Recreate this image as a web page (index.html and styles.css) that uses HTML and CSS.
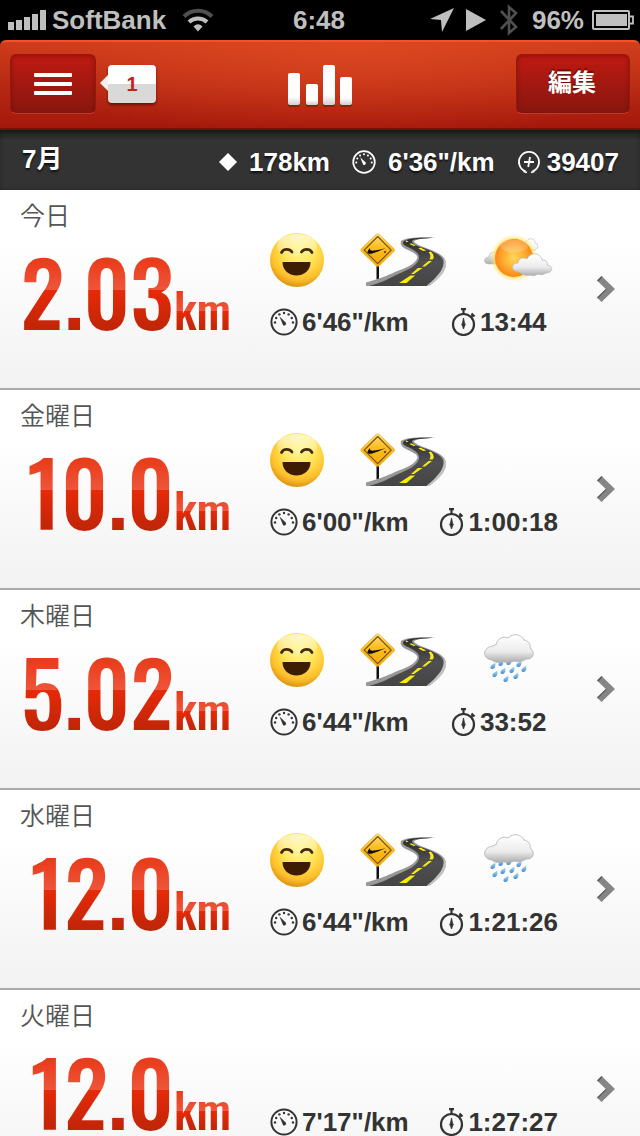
FILE: index.html
```html
<!DOCTYPE html>
<html lang="ja">
<head>
<meta charset="utf-8">
<meta name="viewport" content="width=device-width, initial-scale=1">
<title>7月</title>
<link rel="stylesheet" href="styles.css">
</head>
<body>
<svg class="sprite" aria-hidden="true">
  <defs>
    <radialGradient id="faceFill" cx="55%" cy="32%" r="72%">
      <stop offset="0" stop-color="#fff58a"/><stop offset=".4" stop-color="#ffe65a"/><stop offset=".75" stop-color="#fdc02a"/><stop offset="1" stop-color="#d48a10"/>
    </radialGradient>
    <linearGradient id="faceShine" x1="0" y1="0" x2="0" y2="1">
      <stop offset="0" stop-color="#fff" stop-opacity=".7"/><stop offset="1" stop-color="#fff" stop-opacity="0"/>
    </linearGradient>
    <linearGradient id="signFill" x1="0" y1="0" x2="0" y2="1">
      <stop offset="0" stop-color="#ffdf80"/><stop offset=".4" stop-color="#ffbe22"/><stop offset="1" stop-color="#f9aa00"/>
    </linearGradient>
    <linearGradient id="roadFill" x1="0" y1="0" x2="0" y2="1">
      <stop offset="0" stop-color="#2b2b2b"/><stop offset=".5" stop-color="#505050"/><stop offset="1" stop-color="#444"/>
    </linearGradient>
    <radialGradient id="sunFill" cx="50%" cy="50%" r="52%">
      <stop offset="0" stop-color="#ffd95c"/><stop offset=".55" stop-color="#ffac30"/><stop offset="1" stop-color="#fb8414"/>
    </radialGradient>
    <radialGradient id="sunGlow">
      <stop offset=".75" stop-color="#ffdc3c" stop-opacity=".9"/><stop offset="1" stop-color="#fff3a0" stop-opacity="0"/>
    </radialGradient>
    <linearGradient id="cloudFill" x1="0" y1="0" x2="0" y2="1">
      <stop offset="0" stop-color="#fff"/><stop offset=".6" stop-color="#ececec"/><stop offset="1" stop-color="#adadad"/>
    </linearGradient>
    <linearGradient id="dropFill" x1="0" y1="0" x2="0" y2="1">
      <stop offset="0" stop-color="#b9daf2"/><stop offset="1" stop-color="#3f8fd6"/>
    </linearGradient>
    <linearGradient id="barFill" x1="0" y1="0" x2="0" y2="1">
      <stop offset=".75" stop-color="#fff"/><stop offset="1" stop-color="#cfcfcf"/>
    </linearGradient>
    <symbol id="gauge" viewBox="0 0 28 28">
      <circle cx="14" cy="14" r="12.6" fill="none" stroke="currentColor" stroke-width="2"/>
      <g fill="currentColor">
        <circle cx="5" cy="14.5" r="1.2"/><circle cx="6.2" cy="10" r="1.2"/><circle cx="9.4" cy="6.4" r="1.2"/><circle cx="14" cy="5" r="1.2"/><circle cx="18.600" cy="6.4" r="1.2"/><circle cx="21.800" cy="10" r="1.2"/><circle cx="23" cy="14.5" r="1.2"/>
        <path d="M9.5 8.500l6.400 6.200a2 2 0 0 1-2.800 2.600z"/>
      </g>
    </symbol>
    <symbol id="watch" viewBox="0 0 24 28">
      <circle cx="12" cy="16.500" r="10.500" fill="none" stroke="currentColor" stroke-width="2.200"/>
      <path d="M9.500 1.200h5M12 1v5M20 5.500l3 3M19.500 9l2-2" fill="none" stroke="currentColor" stroke-width="2.200"/>
      <path d="M12 10l1 5a2 2 0 0 1 0 3l-1 3-1-3a2 2 0 0 1 0-3z" fill="currentColor" stroke="currentColor" stroke-width=".8"/>
    </symbol>
    <symbol id="fuel" viewBox="0 0 24 24">
      <path d="M8.500 21.300a10 10 0 1 1 7 0" fill="none" stroke="currentColor" stroke-width="1.800"/>
      <path d="M13 7l-1.800 10M7 12h10M6.500 21.500l3.500 1M17.500 21.500l-3.500 1" fill="none" stroke="currentColor" stroke-width="1.800"/>
    </symbol>
    <symbol id="smile" viewBox="0 0 54 54">
      <circle cx="27" cy="27" r="27" fill="url(#faceFill)"/>
      <ellipse cx="27" cy="13" rx="20" ry="12" fill="url(#faceShine)"/>
      <path d="M11.500 19.500c2-4 8-4 10.500-.5M31.500 19c2.500-3.500 8.500-3.500 10.500.5" fill="none" stroke="#4a2a08" stroke-width="2.800" stroke-linecap="round"/>
      <path d="M12.500 29h28c0 8-6 13.500-14 13.500s-14-5.500-14-13.500z" fill="#3d1d02"/>
    </symbol>
    <symbol id="road" viewBox="0 0 86 54">
      <path d="M6 53v-3.500C18 46 27 43 35 39c10-4 19-7 22-13 2-4-3-6-9-9-7-3-8-6-7-9C46 4 62 4 76 4.500c-12 .8-22 2-22 4 1 3 9 5 16 8 10 4 16 8 16 14 0 8-8 16-17 22.500z" fill="#989898"/>
      <path d="M9 53c12-3 19-7 27-11 11-5 20-8 23-16 1-6-5-9-11-12-5-2-6-4-4-6C50 4.500 62 4.800 73 4.800 60 6 51 6 52 9c2 4 10 5 17 8 9 4 14.500 7 14.500 13 0 9-8 16-17 23z" fill="url(#roadFill)"/>
      <path d="M83.500 25c3 9-6 19-17 28H69c10-7 17-14 17-22 0-2-1-4-2.500-6z" fill="#c2c2c2"/>
      <path d="M39 50h7.500l8.500-7.500h-4.500zM54 41l8.500-6h-4.500l-7 6zM65 33.500l7-5.500h-3.500l-6.500 5.500zM72.500 26.500c2.500-2 1-6-2-8l-2 .8c2 2 2.500 4 1 7.200zM66.500 17.500l-6-3-2.200.9 5 2.500zM56 12.500l-5-2.200-1.500.8 4 2zM48.500 8.500l-2-1-1.200.6 1.500 1.200z" fill="#f8ea14"/>
      <path d="M16.500 32H19v13.500l-2.500.8z" fill="#111"/>
      <path d="M16 1.600q1.700-1.700 3.400 0l14.500 14q1.400 1.500 0 3l-14.500 14q-1.700 1.700-3.400 0l-14.500-14q-1.400-1.500 0-3z" fill="url(#signFill)" stroke="#e2a321" stroke-width=".6"/>
      <path d="M17.700 3.500l13.500 13.600-13.500 13.600L4.200 17.100z" fill="none" stroke="#6b501a" stroke-width="1.100" stroke-linejoin="round"/>
      <path d="M10 15c-3.500 3.500-3.500 6.500 1.500 5.700 3.500-.7 9-3.200 14.500-5.700-5 1.300-9.500 2.400-12.500 2.600-2.700.2-3.900-.8-3.500-2.600z" fill="#111"/>
      <circle cx="25" cy="19" r="1.200" fill="#7a5210"/>
    </symbol>
    <symbol id="sun" viewBox="0 0 70 54">
      <g fill="url(#cloudFill)" stroke="#aaa" stroke-width=".5">
        <path d="M5 31c-6 0-6-7 0-7 0-5 5-6 8-4v11zM42 9c2-5 10-4 9 1 5 1 3 7-1 7h-8z"/>
      </g>
      <circle cx="30" cy="25" r="24" fill="url(#sunGlow)"/>
      <circle cx="30" cy="25" r="19" fill="url(#sunFill)"/>
      <ellipse cx="30" cy="13" rx="14" ry="6.500" fill="#fff" opacity=".22"/>
      <path d="M35 39c-8 0-9-9-1-9 0-5 6-6 9-4 4-8 14-6 15 1 5-1 6 4 5 5 7 1 6 8-1 8-2 2-6 2-8 1-3 2-6 2-8 1-3 1-8 0-11-3z" fill="url(#cloudFill)" stroke="#b6b6b6" stroke-width=".7"/>
    </symbol>
    <symbol id="drop" viewBox="0 0 7 8">
      <path d="M6 0c.8 3 .3 7-2.700 7.500C.5 7.800-.4 5 1.500 3.300 3 2 4.500 1.500 6 0z" fill="url(#dropFill)"/>
    </symbol>
    <symbol id="rain" viewBox="0 0 70 54">
      <use href="#drop" x="6" y="29" width="6" height="8"/><use href="#drop" x="14" y="26" width="6" height="8"/><use href="#drop" x="22" y="25" width="6" height="8"/><use href="#drop" x="32" y="27" width="6" height="8"/>
      <use href="#drop" x="8" y="37" width="6" height="8"/><use href="#drop" x="16" y="34" width="6" height="8"/><use href="#drop" x="25" y="33" width="6" height="8"/><use href="#drop" x="37" y="32" width="6" height="8"/>
      <use href="#drop" x="19" y="42" width="6" height="8"/><use href="#drop" x="29" y="39" width="6" height="8"/>
      <path d="M8 27c-10-1-10-13 1-14 2-2 3-1 3-1 1-7 8-9 12-7 6-6 14-3 16 2 5 1 7 5 6 8 6 4 3 12-4 11-4 3-9 3-12 2-4 2-9 2-11 0-4 2-8 2-11-1z" fill="url(#cloudFill)" stroke="#b0b0b0" stroke-width=".8"/>
    </symbol>
    <symbol id="chevron" viewBox="0 0 18 26">
      <path d="M0 4.500L4.500 0 18 13 4.500 26 0 21.500 8.800 13z" fill="#858585"/>
      <path d="M0 4.500L4.500 0l1 1-4 4.500zM0 21.500L8.800 13l.8.800L1 22.500z" fill="#5e5e5e"/>
    </symbol>
  </defs>
</svg>

<div class="app">
  <div class="status">
    <div class="status-side">
      <svg class="signal" viewBox="0 0 38 20"><path d="M0 12h6v8H0zM8 10h6v10H8zM16 7h6v13h-6zM24 4h6v16h-6zM32 0h6v20h-6z" fill="#bfbfbf"/></svg>
      <span>SoftBank</span>
      <svg class="wifi" viewBox="0 0 32 24">
        <path d="M2 8.500a20 20 0 0 1 28 0" fill="none" stroke="#505050" stroke-width="4"/>
        <path d="M7 14a13 13 0 0 1 18 0" fill="none" stroke="#bfbfbf" stroke-width="4"/>
        <path d="M11.500 18.500q4.500-4.500 9 0L16 23.500z" fill="#bfbfbf"/>
      </svg>
    </div>
    <span>6:48</span>
    <div class="status-side status-right">
      <svg class="locate" viewBox="0 0 24 24"><path d="M24 0L12 24l-1-12L0 11z" fill="#bfbfbf"/></svg>
      <svg class="play" viewBox="0 0 20 22"><path d="M0 0l20 11L0 22z" fill="#bfbfbf"/></svg>
      <svg class="bluetooth" viewBox="0 0 18 32"><path d="M1 7l15 16-7 6V3l7 6L1 25" fill="none" stroke="#505050" stroke-width="2.600"/></svg>
      <span>96%</span>
      <svg class="battery" viewBox="0 0 42 20"><rect x="1" y="1" width="36" height="18" rx="1" fill="none" stroke="#bfbfbf" stroke-width="2"/><path d="M4 4h31v12H4z" fill="#bfbfbf"/><path d="M38 6.500h3v7h-3" fill="none" stroke="#bfbfbf" stroke-width="1.800"/></svg>
    </div>
  </div>

  <header class="navbar">
    <div class="nav-left">
      <button class="nav-button menu" type="button" aria-label="メニュー"><svg class="lines" viewBox="0 0 38 22"><g fill="#fff"><rect width="38" height="4" rx="1"/><rect y="9" width="38" height="4" rx="1"/><rect y="18" width="38" height="4" rx="1"/></g></svg></button>
      <span class="bubble">1</span>
    </div>
    <svg class="bars" viewBox="0 0 64 42">
      <g fill="#6d170c" opacity=".6"><rect y="10" width="12" height="32" rx="2"/><rect x="18" y="21" width="12" height="21" rx="2"/><rect x="35" y="2" width="12" height="40" rx="2"/><rect x="52" y="14" width="12" height="28" rx="2"/></g>
      <g fill="url(#barFill)"><rect y="8" width="12" height="32" rx="2"/><rect x="18" y="19" width="12" height="21" rx="2"/><rect x="35" width="12" height="40" rx="2"/><rect x="52" y="12" width="12" height="28" rx="2"/></g>
    </svg>
    <button class="nav-button edit" type="button">編集</button>
  </header>

  <section class="summary">
    <h1 class="month">7月</h1>
    <div class="total"><svg class="diamond" viewBox="0 0 18 18"><path d="M9 0l9 9-9 9-9-9z" fill="#fff"/></svg><span>178km</span></div>
    <div class="total"><svg class="total-icon" viewBox="0 0 28 28"><use href="#gauge"/></svg><span>6'36"/km</span></div>
    <div class="total tight"><svg class="total-icon" viewBox="0 0 24 24"><use href="#fuel"/></svg><span>39407</span></div>
  </section>

  <main class="runs">
    <a class="run" href="#run-1">
      <div class="lead"><div class="day">今日</div><div class="distance"><span class="value">2.03</span><span class="unit">km</span></div></div>
      <div class="details">
        <div class="tags"><svg class="smile"><use href="#smile"/></svg><svg class="road"><use href="#road"/></svg><svg class="weather"><use href="#sun"/></svg></div>
        <div class="stats"><div class="stat"><svg class="gauge"><use href="#gauge"/></svg><span>6'46"/km</span></div><div class="stat time"><svg class="watch"><use href="#watch"/></svg><span>13:44</span></div></div>
      </div>
      <svg class="chevron"><use href="#chevron"/></svg>
    </a>
    <a class="run" href="#run-2">
      <div class="lead"><div class="day">金曜日</div><div class="distance"><span class="value">10.0</span><span class="unit">km</span></div></div>
      <div class="details">
        <div class="tags"><svg class="smile"><use href="#smile"/></svg><svg class="road"><use href="#road"/></svg></div>
        <div class="stats"><div class="stat"><svg class="gauge"><use href="#gauge"/></svg><span>6'00"/km</span></div><div class="stat time"><svg class="watch"><use href="#watch"/></svg><span>1:00:18</span></div></div>
      </div>
      <svg class="chevron"><use href="#chevron"/></svg>
    </a>
    <a class="run" href="#run-3">
      <div class="lead"><div class="day">木曜日</div><div class="distance"><span class="value">5.02</span><span class="unit">km</span></div></div>
      <div class="details">
        <div class="tags"><svg class="smile"><use href="#smile"/></svg><svg class="road"><use href="#road"/></svg><svg class="weather"><use href="#rain"/></svg></div>
        <div class="stats"><div class="stat"><svg class="gauge"><use href="#gauge"/></svg><span>6'44"/km</span></div><div class="stat time"><svg class="watch"><use href="#watch"/></svg><span>33:52</span></div></div>
      </div>
      <svg class="chevron"><use href="#chevron"/></svg>
    </a>
    <a class="run" href="#run-4">
      <div class="lead"><div class="day">水曜日</div><div class="distance"><span class="value">12.0</span><span class="unit">km</span></div></div>
      <div class="details">
        <div class="tags"><svg class="smile"><use href="#smile"/></svg><svg class="road"><use href="#road"/></svg><svg class="weather"><use href="#rain"/></svg></div>
        <div class="stats"><div class="stat"><svg class="gauge"><use href="#gauge"/></svg><span>6'44"/km</span></div><div class="stat time"><svg class="watch"><use href="#watch"/></svg><span>1:21:26</span></div></div>
      </div>
      <svg class="chevron"><use href="#chevron"/></svg>
    </a>
    <a class="run" href="#run-5">
      <div class="lead"><div class="day">火曜日</div><div class="distance"><span class="value">12.0</span><span class="unit">km</span></div></div>
      <div class="details">
        <div class="tags"></div>
        <div class="stats"><div class="stat"><svg class="gauge"><use href="#gauge"/></svg><span>7'17"/km</span></div><div class="stat time"><svg class="watch"><use href="#watch"/></svg><span>1:27:27</span></div></div>
      </div>
      <svg class="chevron"><use href="#chevron"/></svg>
    </a>
  </main>
</div>
</body>
</html>
```
FILE: styles.css
```css
* { box-sizing: border-box; }
body {
  margin: 0;
  background: #000;
  color: #333;
  font: bold 26px/30px "Liberation Sans", "Noto Sans CJK JP", sans-serif;
}
svg { display: block; flex: none; }
.sprite { position: absolute; width: 0; height: 0; }
.app { height: 100vh; display: flex; flex-direction: column; overflow: hidden; }

.status {
  flex: none;
  display: grid;
  grid-template-columns: 1fr auto 1fr;
  align-items: center;
  height: 40px;
  padding: 0 6px 0 8px;
  color: #bfbfbf;
}
.status > span { margin-right: 4px; }
.status-side { display: flex; align-items: center; gap: 6px; }
.status-right { justify-content: flex-end; gap: 8px; }
.signal { width: 38px; height: 20px; }
.wifi { width: 32px; height: 24px; margin-left: 10px; }
.locate { width: 24px; height: 24px; margin-right: 4px; }
.play { width: 20px; height: 22px; margin-right: 6px; }
.bluetooth { width: 18px; height: 32px; margin-right: 6px; }
.battery { width: 42px; height: 20px; }

.navbar {
  flex: none;
  display: grid;
  grid-template-columns: 1fr auto 1fr;
  align-items: center;
  height: 90px;
  padding: 0 10px 2px;
  border-top: 2px solid #f4512c;
  border-bottom: 2px solid #7c0d0f;
  border-radius: 6px 6px 0 0;
  background:
    radial-gradient(ellipse 60% 110% at 55% 0, rgba(226, 76, 34, .8), rgba(226, 76, 34, 0)),
    linear-gradient(#cb3a1a, #a4180c);
}
.nav-left { display: flex; align-items: center; gap: 12px; }
.nav-button {
  display: flex;
  align-items: center;
  justify-content: center;
  height: 60px;
  padding: 0;
  border: 1px solid #96190f;
  border-bottom-color: #c0392b;
  border-radius: 6px;
  background: linear-gradient(#be1a11, #87170f);
  box-shadow: inset 0 1px 4px rgba(70, 0, 0, .4);
  color: #fff;
  font: bold 24px/30px "Noto Sans CJK JP", sans-serif;
  text-shadow: 0 -2px 1px rgba(80, 0, 0, .6);
}
.menu { width: 86px; }
.edit { width: 114px; justify-self: end; padding: 0 2px 6px 0; }
.lines { width: 38px; height: 22px; }
.bubble {
  position: relative;
  width: 48px;
  height: 38px;
  border-radius: 4px;
  background: linear-gradient(#fff 50%, #d9d9d9 50%);
  box-shadow: 0 2px 3px rgba(60, 0, 0, .6);
  color: #c9211a;
  font-size: 20px;
  line-height: 38px;
  text-align: center;
}
.bubble::before {
  content: "";
  position: absolute;
  left: -8px;
  top: 10px;
  border: solid transparent;
  border-width: 8px 8px 8px 0;
  border-right-color: #f0f0f0;
}
.bars { width: 64px; height: 42px; margin-top: 4px; }

.summary {
  flex: none;
  display: flex;
  align-items: center;
  gap: 22px;
  height: 60px;
  padding: 4px 21px 0 22px;
  background: linear-gradient(#1c1c1c, #333 10px);
  box-shadow: inset 0 0 4px rgba(0, 0, 0, .3);
  color: #fff;
  text-shadow: 0 2px 2px #111;
}
.month { flex: 1; margin: 0; padding-bottom: 6px; font-size: 26px; line-height: 30px; }
.total { display: flex; align-items: center; gap: 12px; }
.tight { gap: 6px; }
.diamond { width: 18px; height: 18px; }
.total-icon { width: 24px; height: 24px; }

.runs { flex: 1; min-height: 0; overflow-y: auto; scrollbar-width: none; }
.run {
  display: grid;
  grid-template-columns: 250px 1fr 18px;
  height: 200px;
  padding: 8px 25px 0 20px;
  border-bottom: 2px solid #aaa;
  background: linear-gradient(#fff 25%, #f2f2f2);
  color: #333;
  text-decoration: none;
}
.day {
  color: #555;
  font: 350 25px/32px "Noto Sans CJK JP", sans-serif;
}
.distance {
  display: flex;
  align-items: baseline;
  font-family: Oswald, "Roboto Condensed", "Liberation Sans", sans-serif;
  font-weight: 500;
}
.value, .unit { color: transparent; background-clip: text; -webkit-background-clip: text; }
.value {
  min-width: 154px;
  text-align: right;
  font-size: 88px;
  line-height: 120px;
  background-image: linear-gradient(#e93a18 23%, #ee553a 50%, #e62a08 50%, #c02508 83%);
}
.unit {
  font-size: 48px;
  line-height: 54px;
  background-image: linear-gradient(#e93a18 15%, #ee553a 53%, #e62a08 53%, #c02508 90%);
}
.details { padding-top: 35px; }
.tags { display: flex; height: 54px; }
.smile { width: 54px; height: 54px; margin-right: 36px; }
.road { width: 86px; height: 54px; margin-right: 38px; }
.weather { width: 70px; height: 54px; }
.stats { display: flex; gap: 22px; padding-top: 20px; }
.stat { display: flex; align-items: center; gap: 4px; white-space: nowrap; }
.time { width: 136px; justify-content: center; }
.gauge { width: 28px; height: 28px; }
.watch { width: 25px; height: 28px; }
.chevron { width: 18px; height: 26px; margin-top: 78px; }
```
